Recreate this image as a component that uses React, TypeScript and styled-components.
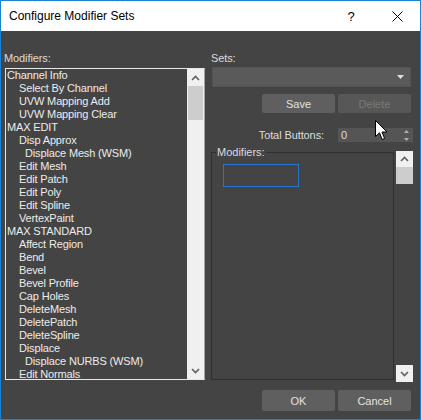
import { createGlobalStyle } from "styled-components";
import styled from "styled-components";

const GlobalStyle = createGlobalStyle`
  html, body {
    margin: 0;
    padding: 0;
    background: #ffffff;
  }
  body {
    font-family: "Liberation Sans", Arial, sans-serif;
  }
`;

const Window = styled.div`
  width: 421px;
  height: 420px;
  box-sizing: border-box;
  border: 1px solid #1883d7;
  display: flex;
  flex-direction: column;
`;

const TitleBar = styled.div`
  height: 30px;
  flex: none;
  background: #ffffff;
  display: flex;
  align-items: center;
`;

const Title = styled.div`
  flex: 1;
  padding-left: 8px;
  font-size: 12px;
  color: #000000;
`;

const CaptionButton = styled.div`
  width: 46px;
  height: 30px;
  display: flex;
  align-items: center;
  justify-content: center;
  font-size: 13px;
  color: #000000;
`;

const Body = styled.div`
  flex: 1;
  position: relative;
  background: #444444;
  padding: 20px 7px 0 3px;
  display: grid;
  grid-template-columns: 201px 202px;
  grid-template-rows: auto auto;
  column-gap: 6px;
  align-content: start;
`;

const Column = styled.div`
  display: flex;
  flex-direction: column;
`;

const Label = styled.div`
  font-size: 11px;
  line-height: 14px;
  height: 14px;
  color: #dcdcdc;
  letter-spacing: -0.1px;
  white-space: nowrap;
`;

const ListBox = styled.div`
  margin: 3px 0 0 1px;
  width: 200px;
  height: 312px;
  box-sizing: border-box;
  border: 1px solid #e8e8e8;
  border-right-color: #a4a4a4;
  display: flex;
`;

const Items = styled.div`
  flex: 1;
  overflow: hidden;
`;

const Item = styled.div<{ $level: number }>`
  height: 13px;
  line-height: 13px;
  font-size: 11px;
  letter-spacing: -0.15px;
  color: #ececec;
  white-space: nowrap;
  padding-left: ${({ $level }) => [1, 13, 19][$level]}px;
`;

const ScrollBar = styled.div<{ $track: string }>`
  width: 17px;
  flex: none;
  display: flex;
  flex-direction: column;
  background: ${({ $track }) => $track};
`;

const ArrowButton = styled.div<{ $h: number }>`
  height: ${({ $h }) => $h}px;
  flex: none;
  background: #f0f0f0;
  display: flex;
  align-items: center;
  justify-content: center;
`;

const Thumb = styled.div<{ $h: number; $inset: number }>`
  height: ${({ $h }) => $h}px;
  flex: none;
  margin: 0 ${({ $inset }) => $inset}px;
  background: #cdcdcd;
`;

const Track = styled.div`
  flex: 1;
`;

const Dropdown = styled.div`
  margin: 2px 0 0 1px;
  width: 199px;
  height: 20px;
  box-sizing: border-box;
  background: #5a5a5a;
  border: 1px solid #525252;
  display: flex;
  align-items: center;
  justify-content: flex-end;
  padding-right: 6px;
`;

const ButtonRow = styled.div<{ $top: number }>`
  margin-top: ${({ $top }) => $top}px;
  display: flex;
  justify-content: flex-end;
  gap: 3px;
  padding-right: 2px;
`;

const Button = styled.div<{ $disabled?: boolean; $h: number }>`
  width: 73px;
  height: ${({ $h }) => $h}px;
  border-radius: 2px;
  background: ${({ $disabled }) => ($disabled ? "#575757" : "#5f5f5f")};
  color: ${({ $disabled }) => ($disabled ? "#7a7a7a" : "#e2e2e2")};
  font-size: 11px;
  display: flex;
  align-items: center;
  justify-content: center;
`;

const SpinnerRow = styled.div`
  margin-top: 15px;
  display: flex;
  align-items: center;
  justify-content: flex-end;
  gap: 14px;
`;

const Spinner = styled.div`
  width: 75px;
  height: 14px;
  background: #555555;
  display: flex;
  align-items: center;
  justify-content: space-between;
  padding: 0 4px 0 3px;
  box-sizing: border-box;
  font-size: 11px;
  color: #dcdcdc;
`;

const GroupRow = styled.div`
  margin-top: 9px;
  height: 231px;
  display: flex;
  gap: 2px;
`;

const GroupBox = styled.div`
  position: relative;
  margin-top: 1px;
  width: 183px;
  height: 228px;
  box-sizing: border-box;
  border: 1px solid #303030;
  padding: 11px 0 0 11px;
`;

const GroupLabel = styled.span`
  position: absolute;
  top: -8px;
  left: 4px;
  padding: 0 1px;
  background: #444444;
  font-size: 11px;
  line-height: 14px;
  color: #dcdcdc;
`;

const FocusSlot = styled.div`
  width: 76px;
  height: 23px;
  box-sizing: border-box;
  border: 1px solid #2a72d4;
`;

const Footer = styled.div`
  grid-column: 1 / -1;
`;

const Cursor = styled.svg`
  position: absolute;
  left: 374px;
  top: 89px;
`;

const modifiers: [string, number][] = [
  ["Channel Info", 0],
  ["Select By Channel", 1],
  ["UVW Mapping Add", 1],
  ["UVW Mapping Clear", 1],
  ["MAX EDIT", 0],
  ["Disp Approx", 1],
  ["Displace Mesh (WSM)", 2],
  ["Edit Mesh", 1],
  ["Edit Patch", 1],
  ["Edit Poly", 1],
  ["Edit Spline", 1],
  ["VertexPaint", 1],
  ["MAX STANDARD", 0],
  ["Affect Region", 1],
  ["Bend", 1],
  ["Bevel", 1],
  ["Bevel Profile", 1],
  ["Cap Holes", 1],
  ["DeleteMesh", 1],
  ["DeletePatch", 1],
  ["DeleteSpline", 1],
  ["Displace", 1],
  ["Displace NURBS (WSM)", 2],
  ["Edit Normals", 1],
];

const Chevron = ({ up }: { up?: boolean }) => (
  <svg width="9" height="6" viewBox="0 0 9 6">
    <path
      d={up ? "M1 5 L4.5 1.5 L8 5" : "M1 1 L4.5 4.5 L8 1"}
      fill="none"
      stroke="#606060"
      strokeWidth="1.6"
    />
  </svg>
);

export default function App() {
  return (
    <>
      <GlobalStyle />
      <Window>
        <TitleBar>
          <Title>Configure Modifier Sets</Title>
          <CaptionButton>?</CaptionButton>
          <CaptionButton>
            <svg width="11" height="11" viewBox="0 0 11 11">
              <path d="M0.5 0.5 L10.5 10.5 M10.5 0.5 L0.5 10.5" stroke="#000" strokeWidth="1" />
            </svg>
          </CaptionButton>
        </TitleBar>
        <Body>
          <Column>
            <Label>Modifiers:</Label>
            <ListBox>
              <Items>
                {modifiers.map(([name, level], i) => (
                  <Item key={i} $level={level}>
                    {name}
                  </Item>
                ))}
              </Items>
              <ScrollBar $track="#f0f0f0">
                <ArrowButton $h={17}>
                  <Chevron up />
                </ArrowButton>
                <Thumb $h={34} $inset={1} />
                <Track />
                <ArrowButton $h={17}>
                  <Chevron />
                </ArrowButton>
              </ScrollBar>
            </ListBox>
          </Column>
          <Column>
            <Label>Sets:</Label>
            <Dropdown>
              <svg width="7" height="4" viewBox="0 0 7 4">
                <path d="M0 0 H7 L3.5 4 Z" fill="#e0e0e0" />
              </svg>
            </Dropdown>
            <ButtonRow $top={7}>
              <Button $h={19}>Save</Button>
              <Button $h={19} $disabled>
                Delete
              </Button>
            </ButtonRow>
            <SpinnerRow>
              <Label>Total Buttons:</Label>
              <Spinner>
                <span>0</span>
                <svg width="5" height="11" viewBox="0 0 5 11">
                  <path d="M2.5 0 L5 3 H0 Z M0 8 H5 L2.5 11 Z" fill="#b0b0b0" />
                </svg>
              </Spinner>
            </SpinnerRow>
            <GroupRow>
              <GroupBox>
                <GroupLabel>Modifiers:</GroupLabel>
                <FocusSlot />
              </GroupBox>
              <ScrollBar $track="transparent">
                <ArrowButton $h={16}>
                  <Chevron up />
                </ArrowButton>
                <Thumb $h={17} $inset={0} />
                <Track />
                <ArrowButton $h={17}>
                  <Chevron />
                </ArrowButton>
              </ScrollBar>
            </GroupRow>
          </Column>
          <Footer>
            <ButtonRow $top={8}>
              <Button $h={21}>OK</Button>
              <Button $h={21}>Cancel</Button>
            </ButtonRow>
          </Footer>
          <Cursor width="13" height="21" viewBox="0 0 13 21">
            <path
              d="M0.5 0.5 L0.5 16.5 L4.5 12.8 L7.2 19.5 L9.6 18.5 L7 12 L12 12 Z"
              fill="#ffffff"
              stroke="#000000"
              strokeWidth="1"
            />
          </Cursor>
        </Body>
      </Window>
    </>
  );
}
